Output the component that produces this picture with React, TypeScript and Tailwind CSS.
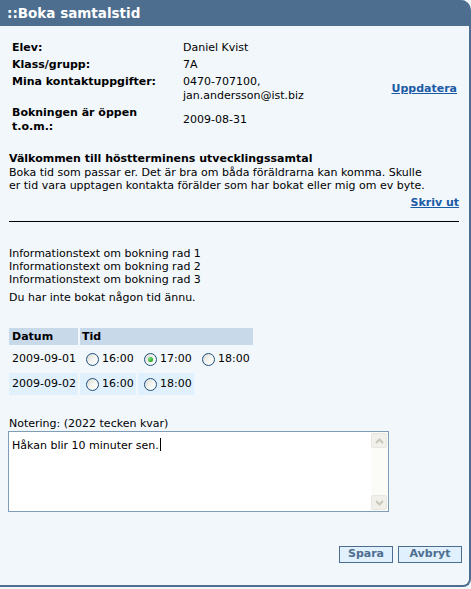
import React from 'react';

const font = "font-['DejaVu_Sans',Verdana,sans-serif]";

function Radio({ checked = false }: { checked?: boolean }) {
  return (
    <span className="relative inline-flex h-[13px] w-[13px] shrink-0 items-center justify-center rounded-full border border-[#1c5180] bg-gradient-to-br from-[#d8d8d2] via-[#f4f4f0] to-white">
      {checked && (
        <span className="h-[5px] w-[5px] rounded-full bg-[radial-gradient(circle_at_35%_35%,#7ee27e,#21a121_70%)]" />
      )}
    </span>
  );
}

function TimeCell({ time, checked, shaded }: { time: string; checked?: boolean; shaded?: boolean }) {
  return (
    <div
      className={`flex w-[56px] items-center gap-[3px] pl-[6px] ${shaded ? 'bg-[#e1f0fd]' : ''}`}
    >
      <Radio checked={checked} />
      <span>{time}</span>
    </div>
  );
}

function ScrollBtn({ down = false }: { down?: boolean }) {
  return (
    <div className="flex h-[15px] w-[16px] items-center justify-center rounded-[2px] border border-[#e8e7df] bg-[#f1f0ea]">
      <svg width="9" height="6" viewBox="0 0 9 6">
        <path
          d={down ? 'M1 1 L4.5 4.5 L8 1' : 'M1 5 L4.5 1.5 L8 5'}
          fill="none"
          stroke="#c9c7b8"
          strokeWidth="2"
        />
      </svg>
    </div>
  );
}

export default function App() {
  return (
    <div className={`h-[589px] w-[471px] bg-[#f2f7fc] text-[11px] text-black ${font}`}>
      <div className="flex h-[587px] w-[471px] flex-col rounded-tr-[10px] rounded-br-[8px] border-r-2 border-b-2 border-[#4d6e8f] bg-[#f2f7fc]">
        {/* header */}
        <div className="flex h-[26px] items-center rounded-tr-[8px] bg-[#4d6e8f] pl-[7px] pt-[1px] text-[13.5px] font-bold text-white">
          ::Boka samtalstid
        </div>

        <div className="flex flex-col pl-[9px] pr-[10px]">
          {/* student info */}
          <div className="mt-[15px] grid grid-cols-[171px_1fr_auto] gap-y-[3px] pl-[3px] pr-[2px] leading-[14px]">
            <div className="font-bold">Elev:</div>
            <div>Daniel Kvist</div>
            <div />

            <div className="font-bold">Klass/grupp:</div>
            <div>7A</div>
            <div />

            <div className="font-bold">Mina kontaktuppgifter:</div>
            <div>
              0470-707100,
              <br />
              jan.andersson@ist.biz
            </div>
            <a href="#" className="self-center font-bold text-[#1b5aa5] underline">
              Uppdatera
            </a>

            <div className="font-bold">
              Bokningen är öppen
              <br />
              t.o.m.:
            </div>
            <div className="self-center">2009-08-31</div>
            <div />
          </div>

          {/* welcome */}
          <div className="mt-[17px] font-bold leading-[15px]">
            Välkommen till höstterminens utvecklingssamtal
          </div>
          <p className="whitespace-nowrap leading-[13px]">
            Boka tid som passar er. Det är bra om båda föräldrarna kan komma. Skulle
            <br />
            er tid vara upptagen kontakta förälder som har bokat eller mig om ev byte.
          </p>
          <div className="mt-[4px] flex justify-end leading-[14px]">
            <a href="#" className="font-bold text-[#1b5aa5] underline">
              Skriv ut
            </a>
          </div>
          <div className="mt-[11px] h-[1px] bg-black" />

          {/* information */}
          <div className="mt-[25px] leading-[13px]">
            <div>Informationstext om bokning rad 1</div>
            <div>Informationstext om bokning rad 2</div>
            <div>Informationstext om bokning rad 3</div>
          </div>
          <div className="mt-[5px] leading-[13px]">Du har inte bokat någon tid ännu.</div>

          {/* times table */}
          <div className="mt-[24px] flex flex-col gap-[2px] leading-[14px]">
            <div className="flex h-[17px] gap-[2px] font-bold">
              <div className="flex w-[69px] items-center bg-[#c8d9ea] pl-[3px]">Datum</div>
              <div className="flex w-[173px] items-center bg-[#c8d9ea] pl-[2px]">Tid</div>
            </div>
            <div className="flex h-[24px] gap-[2px]">
              <div className="flex w-[69px] items-center pl-[3px]">2009-09-01</div>
              <TimeCell time="16:00" />
              <TimeCell time="17:00" checked />
              <TimeCell time="18:00" />
            </div>
            <div className="flex h-[22px] gap-[2px]">
              <div className="flex w-[69px] items-center bg-[#e1f0fd] pl-[3px]">2009-09-02</div>
              <TimeCell time="16:00" shaded />
              <TimeCell time="18:00" shaded />
            </div>
          </div>

          {/* note */}
          <div className="mt-[22px] leading-[14px]">Notering: (2022 tecken kvar)</div>
          <div className="-ml-[1px] flex h-[81px] w-[381px] border border-[#7f9db9] bg-white">
            <div className="flex-1 pl-[3px] pt-[4px] leading-[14px]">
              Håkan blir 10 minuter sen.
              <span className="ml-[1px] inline-block h-[13px] w-[1px] translate-y-[2px] bg-black" />
            </div>
            <div className="flex w-[17px] flex-col justify-between bg-[#fbfbf7] py-[1px]">
              <ScrollBtn />
              <ScrollBtn down />
            </div>
          </div>
        </div>

        {/* actions */}
        <div className="mt-[34px] flex justify-end gap-[5px] pr-[7px]">
          <button className="flex h-[17px] w-[54px] items-center justify-center border border-[#4d6e8f] bg-[#e1f0fd] font-bold text-[#4d6e8f]">
            Spara
          </button>
          <button className="flex h-[17px] w-[64px] items-center justify-center border border-[#4d6e8f] bg-[#e1f0fd] font-bold text-[#4d6e8f]">
            Avbryt
          </button>
        </div>
      </div>
    </div>
  );
}
